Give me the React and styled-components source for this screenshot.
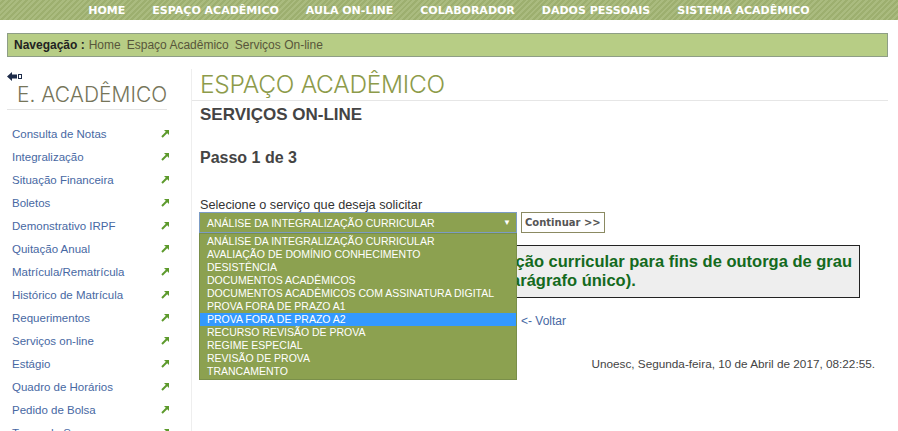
import React from "react";
import styled, { createGlobalStyle } from "styled-components";

const GlobalStyle = createGlobalStyle`
    body {
        margin: 0;
        background: #ffffff;
        font-family: "Liberation Sans", Arial, sans-serif;
        font-size: 12px;
        color: #333;
    }
`;

const TopNav = styled.nav`
    height: 20px;
    display: flex;
    justify-content: center;
    align-items: center;
    gap: 27px;
    background: repeating-linear-gradient(135deg, #aabb7f 0 2px, #9daf6f 2px 4px);
    a {
        font-family: "DejaVu Sans", Verdana, sans-serif;
        font-weight: bold;
        font-size: 11px;
        color: #ffffff;
        text-decoration: none;
    }
`;

const Breadcrumb = styled.div`
    margin: 13px 10px 0 7px;
    height: 22px;
    line-height: 22px;
    padding-left: 6px;
    background: #b7cd85;
    border: 1px solid #8e9e86;
    font-size: 12px;
    color: #57563b;
    b {
        color: #222;
        margin-right: 4px;
    }
    span {
        margin-right: 6px;
    }
`;

const Page = styled.div`
    display: flex;
    margin-top: 12px;
`;

const Sidebar = styled.aside`
    width: 163px;
    padding-left: 7px;
    margin-right: 21px;
    flex-shrink: 0;
`;

const BackIcon = styled.div`
    height: 14px;
    padding-top: 1px;
`;

const SideTitle = styled.div`
    font-family: Inter, "Liberation Sans", sans-serif;
    font-weight: 300;
    font-size: 21px;
    white-space: nowrap;
    color: #76755a;
    padding-left: 10px;
    margin-right: 3px;
    line-height: 22px;
    padding-bottom: 3px;
    border-bottom: 1px solid #e4e4e4;
`;

const SideList = styled.ul`
    list-style: none;
    margin: 12px 0 0;
    padding: 0;
`;

const SideItem = styled.li`
    display: flex;
    justify-content: space-between;
    align-items: center;
    height: 23px;
    padding: 0 0 0 5px;
    a {
        color: #4768a3;
        text-decoration: none;
        font-size: 11.5px;
    }
`;

const Main = styled.main`
    flex: 1;
    margin-right: 10px;
    border-left: 1px solid #eeeeee;
    min-height: 400px;
`;

const TitleBar = styled.div`
    padding-left: 8px;
    border-bottom: 1px solid #e6e6e6;
    h1 {
        margin: 0;
        font-family: Inter, "Liberation Sans", sans-serif;
        font-weight: 300;
        font-size: 24.5px;
        letter-spacing: -0.3px;
        line-height: 31px;
        color: #8d9b4a;
    }
`;

const Content = styled.div`
    padding-left: 8px;
`;

const SubTitle = styled.h2`
    margin: 3px 0 0;
    font-size: 17px;
    line-height: 22px;
    color: #444;
    font-weight: bold;
`;

const Step = styled.h3`
    margin: 21px 0 0;
    font-size: 16px;
    line-height: 22px;
    color: #444;
    font-weight: bold;
`;

const Form = styled.div`
    margin-top: 29px;
    display: grid;
    grid-template-columns: 318px auto;
    column-gap: 4px;
    justify-content: start;
    position: relative;
    margin-left: -1px;
`;

const Label = styled.div`
    grid-column: 1 / 3;
    font-size: 12.7px;
    color: #333;
    line-height: 14px;
    margin-left: 1px;
`;

const Select = styled.div`
    height: 19px;
    display: flex;
    align-items: center;
    justify-content: space-between;
    padding: 0 5px 0 7px;
    background: #8ca150;
    border: 1px solid #7c9cc4;
    color: #fff;
    font-size: 10.5px;
    text-transform: uppercase;
    i {
        font-style: normal;
        font-size: 8px;
    }
`;

const Options = styled.ul`
    position: absolute;
    left: 0;
    top: 35px;
    width: 318px;
    box-sizing: border-box;
    margin: 0;
    padding: 1px 0;
    list-style: none;
    background: #8ca150;
    border: 1px solid #7a8f4a;
    z-index: 2;
`;

const Option = styled.li`
    height: 13px;
    line-height: 13px;
    padding-left: 7px;
    color: #fff;
    font-size: 10.5px;
    background: ${(p) => (p.$active ? "#3399ff" : "transparent")};
`;

const Button = styled.button`
    height: 21px;
    padding: 0 3px;
    background: #fff;
    border: 1px solid #8b8a62;
    font-family: "DejaVu Sans", Verdana, sans-serif;
    font-weight: bold;
    font-size: 10px;
    color: #555;
    justify-self: start;
`;

const InfoBox = styled.div`
    grid-column: 1 / 3;
    width: 661px;
    box-sizing: border-box;
    margin-top: 12px;
    padding: 6px 6px 7px 34px;
    background: #eeeeee;
    border: 1px solid #222;
    font-size: 16.5px;
    font-weight: bold;
    line-height: 19px;
    color: #146a1d;
    white-space: nowrap;
    overflow: hidden;
`;

const BackLink = styled.a`
    grid-column: 2;
    margin-top: 16px;
    color: #4768a3;
    font-size: 12px;
    text-decoration: none;
`;

const DateLine = styled.div`
    margin-top: 29px;
    text-align: right;
    padding-right: 13px;
    font-size: 11.75px;
    color: #444;
`;

const menu = ["HOME", "ESPAÇO ACADÊMICO", "AULA ON-LINE", "COLABORADOR", "DADOS PESSOAIS", "SISTEMA ACADÊMICO"];

const links = [
    "Consulta de Notas",
    "Integralização",
    "Situação Financeira",
    "Boletos",
    "Demonstrativo IRPF",
    "Quitação Anual",
    "Matrícula/Rematrícula",
    "Histórico de Matrícula",
    "Requerimentos",
    "Serviços on-line",
    "Estágio",
    "Quadro de Horários",
    "Pedido de Bolsa",
    "Termo de Seguro",
];

const services = [
    "ANÁLISE DA INTEGRALIZAÇÃO CURRICULAR",
    "AVALIAÇÃO DE DOMÍNIO CONHECIMENTO",
    "DESISTÊNCIA",
    "DOCUMENTOS ACADÊMICOS",
    "DOCUMENTOS ACADÊMICOS COM ASSINATURA DIGITAL",
    "PROVA FORA DE PRAZO A1",
    "PROVA FORA DE PRAZO A2",
    "RECURSO REVISÃO DE PROVA",
    "REGIME ESPECIAL",
    "REVISÃO DE PROVA",
    "TRANCAMENTO",
];

const GoArrow = () => (
    <svg width="9" height="9" viewBox="0 0 9 9">
        <path d="M1 8 L6 3" stroke="#5d9a2c" strokeWidth="2" />
        <polygon points="3,1 8,1 8,6" fill="#5d9a2c" />
    </svg>
);

const BackArrow = () => (
    <svg width="16" height="9" viewBox="0 0 16 9">
        <polygon points="0,4.5 5,0 5,2.5 10,2.5 10,6.5 5,6.5 5,9" fill="#1e2c4a" />
        <rect x="11.5" y="2.5" width="3" height="4" fill="none" stroke="#1e2c4a" strokeWidth="1" />
    </svg>
);

const App = () => {
    return (
        <>
            <GlobalStyle />
            <TopNav>
                {menu.map((m) => (
                    <a key={m} href="#">
                        {m}
                    </a>
                ))}
            </TopNav>
            <Breadcrumb>
                <b>Navegação :</b>
                <span>Home</span>
                <span>Espaço Acadêmico</span>
                <span>Serviços On-line</span>
            </Breadcrumb>
            <Page>
                <Sidebar>
                    <BackIcon>
                        <BackArrow />
                    </BackIcon>
                    <SideTitle>E. ACADÊMICO</SideTitle>
                    <SideList>
                        {links.map((l) => (
                            <SideItem key={l}>
                                <a href="#">{l}</a>
                                <GoArrow />
                            </SideItem>
                        ))}
                    </SideList>
                </Sidebar>
                <Main>
                    <TitleBar>
                        <h1>ESPAÇO ACADÊMICO</h1>
                    </TitleBar>
                    <Content>
                        <SubTitle>SERVIÇOS ON-LINE</SubTitle>
                        <Step>Passo 1 de 3</Step>
                        <Form>
                            <Label>Selecione o serviço que deseja solicitar</Label>
                            <Select>
                                <span>{services[0]}</span>
                                <i>▼</i>
                            </Select>
                            <Button>Continuar &gt;&gt;</Button>
                            <Options>
                                {services.map((s, i) => (
                                    <Option key={s} $active={i === 6}>
                                        {s}
                                    </Option>
                                ))}
                            </Options>
                            <InfoBox>
                                Solicitação de análise da integralização curricular para fins de outorga de grau
                                <br />
                                (Resolução CES nº 6/2013, art. 6º, parágrafo único).
                            </InfoBox>
                            <BackLink href="#">&lt;- Voltar</BackLink>
                        </Form>
                        <DateLine>Unoesc, Segunda-feira, 10 de Abril de 2017, 08:22:55.</DateLine>
                    </Content>
                </Main>
            </Page>
        </>
    );
};

export default App;
